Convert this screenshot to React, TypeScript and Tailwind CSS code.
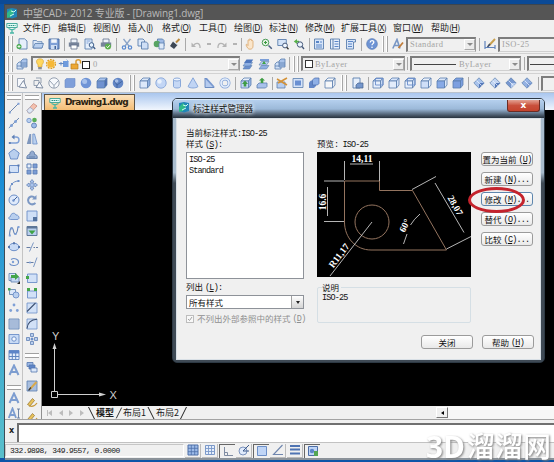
import React from 'react';

const B = '#5b7fae';
const L = '#b9cfee';
const M = '#7fa0d6';

const cube = (front: string, top = '#dbe7f8', side = '#8fafdf') => (
  <>
    <path d="M1 4 4 1h7L8.500 4z" fill={top} stroke={B} strokeWidth=".8" />
    <path d="M8.500 4 11 1v7l-2.500 3z" fill={side} stroke={B} strokeWidth=".8" />
    <path d="M1 4h7.500v7H1z" fill={front} stroke={B} strokeWidth=".8" />
  </>
);

const diamond = (a: string, b: string) => (
  <>
    <path d="M6 .8 11.200 6 6 11.200.8 6z" fill={a} stroke={B} strokeWidth=".7" />
    <path d="M6 6 11.200 6 6 11.200z" fill={b} />
    <path d="M3.500 3.500 8.500 8.500" stroke="#e9f1fc" strokeWidth=".8" />
  </>
);

const page = <path d="M3 .8h5.500L11 3v8H3z" fill="#e6effb" stroke={B} strokeWidth=".9" />;

const glyphs: Record<string, React.ReactNode> = {
  logo: (
    <>
      <path d="M1 2l5-1 5 1v8l-5 1.500L1 10z" fill="#2186b8" />
      <path d="M1 6l4-4 3 3-3 5-4 1z" fill="#2fb98a" />
      <path d="M5 4l3 1 2-2M4 9l4-2" stroke="#c9fff2" fill="none" />
    </>
  ),
  doc: (
    <>
      <path d="M.8 1.500h10.400v4H.8z" fill="#e4fbf6" stroke="#39a394" strokeWidth=".9" />
      <path d="M2.500 3.500h7" stroke="#2b9384" strokeWidth="1.200" strokeDasharray="1.500 .6" />
      <path d="M2.500 6.500 6 8l3.500-1.500M6 7v4M4 11h4" stroke="#48b5a5" fill="none" strokeWidth="1.300" />
    </>
  ),
  new: (
    <>
      {page}
      <circle cx="3" cy="8.500" r="2.500" fill="#46a84c" />
      <path d="M3 7v3M1.500 8.500h3" stroke="#fff" strokeWidth=".8" />
    </>
  ),
  open: (
    <>
      <path d="M1 10V2.500h3.500l1 1.200H10V10z" fill="#dbe7f8" stroke={B} strokeWidth=".8" />
      <path d="M1 10l2-4.500h8.500L10 10z" fill={L} stroke={B} strokeWidth=".8" />
    </>
  ),
  save: (
    <>
      <path d="M1 1h10v10H1z" fill={M} stroke="#41649b" strokeWidth=".9" />
      <path d="M3.200 1.300h5.600v3.500H3.200z" fill="#f2f6fc" />
      <path d="M3 7h6v4H3z" fill="#cfdef3" />
      <path d="M6.500 8h1.500v3H6.500z" fill="#41649b" />
    </>
  ),
  print: (
    <>
      <path d="M3 1h6v4H3z" fill="#eef3fa" stroke="#60708a" strokeWidth=".8" />
      <path d="M.8 4.500h10.400v4.200H.8z" fill="#77849a" />
      <path d="M3 7h6v4H3z" fill="#fff" stroke="#60708a" strokeWidth=".8" />
    </>
  ),
  printok: (
    <>
      <path d="M3 1h6v4H3z" fill="#eef3fa" stroke="#60708a" strokeWidth=".8" />
      <path d="M.8 4.500h10.400v4.200H.8z" fill="#77849a" />
      <circle cx="8" cy="8.500" r="3" fill="#5cae4d" />
      <path d="M6.500 8.500 7.700 9.700 9.700 7.300" stroke="#fff" fill="none" />
    </>
  ),
  preview: (
    <>
      <path d="M1 1h7v10H1z" fill="#e6effb" stroke={B} strokeWidth=".9" />
      <path d="M2.500 3h4M2.500 5h2" stroke={M} />
      <circle cx="7.500" cy="7" r="2.300" fill="#e8f4ff" stroke="#3f5f8c" />
      <path d="M9.200 8.800 11.200 11" stroke="#3f5f8c" strokeWidth="1.400" />
    </>
  ),
  cut: (
    <>
      <path d="M2.500 1 8 8M9.500 1 4 8" stroke="#8aa4c8" strokeWidth="1.300" />
      <circle cx="3" cy="9.500" r="1.700" fill="none" stroke="#5b8bd0" strokeWidth="1.200" />
      <circle cx="9" cy="9.500" r="1.700" fill="none" stroke="#5b8bd0" strokeWidth="1.200" />
    </>
  ),
  copy: (
    <>
      <path d="M1 1h5l1.500 1.500V8H1z" fill="#dde9f9" stroke={B} strokeWidth=".9" />
      <path d="M4.500 4h4.700L11 5.500V11H4.500z" fill="#cfdff6" stroke={B} strokeWidth=".9" />
    </>
  ),
  paste: (
    <>
      <path d="M4.500 1h5l1.500 1.500V8H4.500z" fill="#9fbbe6" stroke={B} strokeWidth=".9" />
      <circle cx="4" cy="6" r="3.300" fill="#58a463" />
      <path d="M6 5h5v6H6z" fill="#dde9f9" stroke={B} strokeWidth=".8" />
    </>
  ),
  brush: (
    <>
      <path d="M10.500 1 7 4.500" stroke="#b9893e" strokeWidth="2" />
      <path d="M4 3.500 8.500 7 5 11 1 8z" fill="#3d4754" />
      <path d="M4.500 3.800 8.200 6.600" stroke="#cdd5df" />
    </>
  ),
  undo: (
    <>
      <path d="M3.500 7.500c2-3 6-3 6.500 1V10" fill="none" stroke="#b4b4b4" strokeWidth="1.300" />
      <path d="M1.500 4.500v4.500H6z" fill="#b4b4b4" />
    </>
  ),
  redo: (
    <>
      <path d="M8.500 7.500c-2-3-6-3-6.500 1V10" fill="none" stroke="#b4b4b4" strokeWidth="1.300" />
      <path d="M10.500 4.500v4.500H6z" fill="#b4b4b4" />
    </>
  ),
  pan: (
    <path
      d="M3 6V2.500c0-.8 1-.8 1.200 0V1.500c0-.8 1.200-.8 1.200 0v.3c0-.8 1.300-.8 1.300.2v1c0-.7 1.300-.7 1.300.2V8c0 2-1 3.200-3 3.200S2.500 10 1 7c0-1 1-1 2 .5z"
      fill="#fbe6cb"
      stroke="#d9a66b"
      strokeWidth=".8"
    />
  ),
  zoom: (
    <>
      <circle cx="4.500" cy="4.500" r="3.300" fill="#e5f3e5" stroke="#4f9d5a" />
      <path d="M3 4.500h3M4.500 3v3" stroke="#3a9a3f" />
      <path d="M7.500 7.500 10.800 10.800" stroke="#4a5f80" strokeWidth="1.500" />
    </>
  ),
  zoomwin: (
    <>
      <path d="M.8 1.500h8.500v6H.8z" fill="#d5e4f8" stroke={B} strokeWidth=".9" />
      <circle cx="8" cy="7.500" r="2.400" fill="#eef6ff" stroke="#46597a" />
      <path d="M9.700 9.300 11.500 11.200" stroke="#333" strokeWidth="1.300" />
    </>
  ),
  zoomprev: (
    <>
      <path d="M.8 3.500 4 1v1.700h2v1.700H4V6z" fill="#56b04a" />
      <circle cx="7" cy="6.500" r="2.700" fill="#eef6ff" stroke="#46597a" />
      <path d="M9 8.500 11 11" stroke="#46597a" strokeWidth="1.300" />
    </>
  ),
  props: (
    <>
      <path d="M1.500 1h9v10h-9z" fill="#d7e5f8" stroke={B} strokeWidth=".9" />
      <path d="M3 3h3v2H3z" fill="#5a86c8" />
      <path d="M3 7h6M3 9h6M7 4h2" stroke="#5a86c8" />
    </>
  ),
  center: (
    <>
      <path d="M1.500 1h9v10h-9z" fill="#e6effb" stroke={B} strokeWidth=".9" />
      <path d="M4 1v10" stroke={B} />
      <path d="M5.500 3.500h4M5.500 6h4M5.500 8.500h4" stroke="#5a86c8" strokeWidth="1.200" />
    </>
  ),
  palette: (
    <>
      <path d="M1.500 1.500h9V4H8.500v7h-7z" fill="#d7e5f8" stroke={B} strokeWidth=".9" />
      <path d="M3 3.500h5M3 6h4M3 8.500h4" stroke="#5a86c8" strokeWidth="1.200" />
    </>
  ),
  help: (
    <>
      <circle cx="6" cy="6" r="5.400" fill="#6d93d4" stroke="#5777ae" strokeWidth=".6" />
      <path d="M4.200 4.500c0-2.500 3.700-2.400 3.600-.2C7.800 5.600 6 5.700 6 7.300" stroke="#fff" strokeWidth="1.300" fill="none" />
      <circle cx="6" cy="9.200" r=".8" fill="#fff" />
    </>
  ),
  textstyle: (
    <>
      <path d="M.8 10.500 5 1.500l3 9M2.500 7.500H7" stroke="#7896c4" strokeWidth="1.600" fill="none" />
      <path d="M11 4.500 6.500 10" stroke="#c07d3b" strokeWidth="1.800" />
    </>
  ),
  dimstyle: (
    <>
      <path d="M1 3v8M1 9.500h10M11 7v4" stroke="#6184bd" strokeWidth="1.200" />
      <path d="M11 1 5 7.500" stroke="#c9a04e" strokeWidth="1.900" />
      <path d="M6 6 3.500 9" stroke="#3d4f70" strokeWidth="1.600" />
    </>
  ),
  layers: (
    <>
      <path d="M1 6l2-2h4v7H1z" fill="#cfdff6" stroke={B} strokeWidth=".8" />
      <path d="M5 3l2-2h4v8H5z" fill="#a9c3ea" stroke={B} strokeWidth=".8" />
      <path d="M5 5h6M5 7h6M1 8h4" stroke={B} strokeWidth=".8" />
    </>
  ),
  stack: (
    <>
      <path d="M1 11 3.500 7.500H10L7.500 11z" fill="#6a8fcf" stroke={B} strokeWidth=".6" />
      <path d="M1 8 3.500 4.500H10.500L8 8z" fill="#8fb0e4" stroke={B} strokeWidth=".6" />
      <path d="M2 5 4.500 1.500H11.200L9 5z" fill="#4f77bd" />
    </>
  ),
  stackgreen: (
    <>
      <path d="M1 11 3.500 7.500H11L8.500 11z" fill="#8fb0e4" stroke={B} strokeWidth=".6" />
      <path d="M1 7 3.500 3.500H11L8.500 7z" fill="#b8ceef" stroke={B} strokeWidth=".6" />
      <path d="M2 1h9v2H2z" fill="#7b9ed8" />
      <path d="M4 6 6 3l2 3z" fill="#3da343" />
    </>
  ),
  bulb: (
    <>
      <path d="M6 .8c-4.500 0-4 4-2 6V9h4V6.800c2-2 2.500-6-2-6z" fill="#ffd75e" stroke="#d3a02b" strokeWidth=".6" />
      <path d="M4.200 9h3.600v2.300H4.200z" fill="#8d8d8d" />
    </>
  ),
  sun: (
    <>
      <circle cx="6" cy="6" r="4.500" fill="none" stroke="#dd9c20" strokeWidth="1.200" strokeDasharray="1.800 1" />
      <circle cx="6" cy="6" r="3.700" fill="#f6b836" />
    </>
  ),
  freeze: (
    <>
      <path d="M5 3h5.500v6H5z" fill="#6f9bdd" />
      <path d="M.8 5.500h5M3 4v3.500" stroke="#6388c2" />
      <path d="M8.500 1.500 11 4" stroke="#9ab7e2" />
    </>
  ),
  lock: (
    <>
      <path d="M1 6h7v5H1z" fill="#eda834" stroke="#b97e1f" strokeWidth=".7" />
      <path d="M6 6V3.500C6 1 10.800 1 10.500 4v1.500" fill="none" stroke="#d99a31" strokeWidth="1.500" />
    </>
  ),
  tri: (
    <>
      <path d="M1.500 1.500h7v8h-7z" fill="#f7f9fc" stroke="#8b97a9" strokeWidth=".8" />
      <path d="M3 10 7.500 3.500 10.500 11z" fill="#f7f9fc" stroke="#7f8da3" />
    </>
  ),
  tri3: (
    <>
      <path d="M2 3.500h5v5H2zM4 1h5v5" fill="none" stroke="#8b97a9" strokeWidth=".9" />
      <path d="M4 10.500 7.500 5 11 11z" fill="#f7f9fc" stroke="#7f8da3" />
    </>
  ),
  wiresphere: (
    <>
      <circle cx="6" cy="6" r="5.200" fill="#f7f9fc" stroke="#8b97a9" strokeWidth=".9" />
      <path d="M1.500 3.500 6 8.500 10.500 3.500M6 8.500v2.500" stroke="#8b97a9" fill="none" strokeWidth=".9" />
    </>
  ),
  box1: <path d="M2.500 1.500H11V9L9.500 10.500H1V3z" fill="#7f9fda" stroke="#6c8ac2" strokeWidth=".6" />,
  sphere1: (
    <>
      <circle cx="6" cy="6" r="5.300" fill="#6f94d6" />
      <circle cx="4.600" cy="4.400" r="2.500" fill="#b7cdf1" opacity=".8" />
    </>
  ),
  box2: cube('#7092d0', '#a9c3ee', '#4c6db0'),
  sphere2: (
    <>
      <circle cx="6" cy="6" r="5.300" fill="#6387c6" />
      <path d="M2 3.500 5 8 10.500 4M5 8v3" stroke="#3f5f99" fill="none" strokeWidth=".8" />
      <circle cx="4.600" cy="4" r="1.800" fill="#c3d6f4" opacity=".7" />
    </>
  ),
  cube: cube('#dce8fa'),
  cubea: (
    <>
      {cube('#e6effc', '#dbe7f8', '#c8d9f4')}
      <path d="M3.500 1.500H11V8H3.500z" fill="none" stroke="#6c8fcc" strokeWidth=".9" />
    </>
  ),
  cubeb: cube('#e2ecfb', '#d8e5fa', '#d8e5fa'),
  cubec: cube('#cfdff8', '#eaf1fb', '#eaf1fb'),
  cubed: cube('#86a9e6', '#dbe7f8', '#dbe7f8'),
  cubee: cube('#7c9fe0', '#7c9fe0', '#7c9fe0'),
  cubew: cube('#f6f7f9', '#f6f7f9', '#e9edf3'),
  ball: (
    <>
      <circle cx="6" cy="6" r="5.200" fill="#c3d6f5" stroke={M} strokeWidth=".8" />
      <circle cx="4.500" cy="4.500" r="2.200" fill="#eaf2fd" />
    </>
  ),
  cyl: (
    <>
      <path d="M2.500 2.500v7c0 2 7 2 7 0v-7" fill="#c6d8f5" stroke={M} strokeWidth=".9" />
      <ellipse cx="6" cy="2.500" rx="3.500" ry="1.500" fill="#eef4fd" stroke={M} strokeWidth=".9" />
    </>
  ),
  cone: <path d="M6 .8 11 9.500c-2 2-8 2-10 0z" fill="#c0d4f4" stroke={M} strokeWidth=".9" />,
  wedge: (
    <>
      <path d="M2 1v9.500h9z" fill="#b5cbef" stroke="#5f82bb" strokeWidth=".9" />
      <path d="M2 1h2l7.500 8.500-.5 1z" fill="#7496d0" />
    </>
  ),
  torus: (
    <>
      <circle cx="6" cy="6" r="4" fill="none" stroke={M} strokeWidth="3" />
      <circle cx="6" cy="6" r="4" fill="none" stroke="#e3edfb" strokeWidth="1.700" />
    </>
  ),
  extrude: (
    <>
      {cube('#c3d6f5', '#e7effb', '#9cb8e5')}
      <path d="M5 3.500 8 7H6.300v2.500H3.700V7H2z" fill="#3f9c45" />
    </>
  ),
  revolve: (
    <>
      <path d="M1 8 3 6h8v3.500L9.500 11H1z" fill="#a8c1ea" stroke={B} strokeWidth=".8" />
      <path d="M6 .8 9 3.500H7.300V6H4.700V3.500H3z" fill="#3f9c45" />
    </>
  ),
  slice: (
    <>
      <path d="M1 5h8v6H1z" fill="#b8ceef" stroke={B} strokeWidth=".8" />
      <path d="M1 2 11 8M11 1 2 6" stroke="#d49237" strokeWidth="1.500" />
    </>
  ),
  section: (
    <>
      <path d="M1 1.500h10v9H1z" fill="#d5e3f8" stroke={B} strokeWidth=".8" />
      <path d="M3 3.500h6v5H3z" fill="#6a90d2" />
    </>
  ),
  interfere: (
    <>
      <path d="M1 5.500 3 3.500h5v5.500L6 11H1z" fill="#6488c9" />
      <path d="M4.500 3 6.500 1H11v5.500L9.500 8h-5z" fill="#8fb0e6" stroke="#4a6dac" strokeWidth=".7" />
    </>
  ),
  view: (
    <>
      <path d="M1 1h7v10H1z" fill="#e6effb" stroke={B} strokeWidth=".9" />
      <path d="M4 11V8l2-2h5v5z" fill="#7597cc" stroke="#46618e" strokeWidth=".7" />
    </>
  ),
  dia1: diamond('#a9c3ec', '#5679ba'),
  dia2: diamond('#c3d5f2', '#5679ba'),
  dia3: diamond('#7898d0', '#b4caee'),
  dia4: diamond('#94b1e2', '#7898d0'),
  line: (
    <>
      <path d="M1.500 10.500 10.500 1.500" stroke="#6d87b0" />
      <path d="M.8 9.500h2v2h-2zM9.500.8h2v2h-2z" fill={M} />
    </>
  ),
  xline: (
    <>
      <path d="M.8 11 11 1" stroke="#6d87b0" />
      <circle cx="3.500" cy="8.500" r="1.500" fill={M} />
      <circle cx="7.500" cy="4.500" r="1.500" fill={M} />
    </>
  ),
  pline: (
    <>
      <path d="M1.500 10H8c4 0 4-6 0-6H5.500" fill="none" stroke={M} strokeWidth="1.400" />
      <path d="M6.500 1.500 3.500 4l3 2.500zM.8 9h2v2h-2z" fill="#5f80b5" />
    </>
  ),
  polygon: <path d="M6 1 11.200 5 9.300 11H2.700L.8 5z" fill={L} stroke="#6c8fc8" />,
  rect: (
    <>
      <path d="M1.500 2.500h9v7h-9z" fill="#d2e1f7" stroke="#6c8fc8" />
      <path d="M.5 8.500h2v2h-2zM9.500 1.500h2v2h-2z" fill="#5476ad" />
    </>
  ),
  arc: (
    <>
      <path d="M1.800 10.500C2 6 5 2.500 10 2" fill="none" stroke="#6c8fc8" />
      <path d="M.8 9.500h2v2h-2zM9.500 1h2v2h-2zM3 4h2v2H3z" fill="#6c8fc8" />
    </>
  ),
  circle: (
    <>
      <circle cx="6" cy="6" r="5" fill="#dfeafb" stroke="#6c8fc8" />
      <path d="M5.500 6.500 9 3" stroke="#41629a" />
      <circle cx="5.500" cy="6.500" r="1.200" fill="#6c8fc8" />
    </>
  ),
  cloud: (
    <path d="M2.500 9.500c-2.500 0-2-3 0-3C2.500 3 7 2 8 5c3-.5 4.500 4.500 1 4.500z" fill={L} stroke="#6c8fc8" strokeWidth=".9" />
  ),
  spline: (
    <>
      <path d="M1.500 10.500C2 1 4.500 1 5.500 6s3.500 4 4.500-4" fill="none" stroke="#5f80b5" strokeWidth="1.100" />
      <path d="M.8 9.500h2v2h-2zM2.500 2.500h2v2h-2zM9.500 1h2v2h-2zM6.500 8h2v2h-2z" fill={M} />
    </>
  ),
  ellipse: (
    <>
      <ellipse cx="6" cy="6" rx="5" ry="3.700" fill="#c9dbf5" stroke="#6c8fc8" />
      <path d="M0 5h2v2H0zM10 5h2v2h-2zM5 1.300h2v2H5z" fill="#5476ad" />
    </>
  ),
  earc: (
    <>
      <path d="M3 3.500C6 1.500 11 3 10.500 6.500 10 10 3 10.500 1.500 7.500" fill="none" stroke="#6c8fc8" strokeWidth="1.100" />
      <circle cx="5" cy="6" r="1.200" fill={M} />
    </>
  ),
  insert: (
    <>
      <path d="M1 1.500h7v7H1z" fill="#dce8fa" stroke={B} strokeWidth=".8" />
      <path d="M3 5h8v5H3z" fill="#c5d8f3" stroke={B} strokeWidth=".8" />
      <path d="M3 3h4V1l4 3.500L7 8V6H3z" fill="#43a648" />
      <path d="M9 12h3V9z" fill="#222" />
    </>
  ),
  block: (
    <>
      <path d="M1.500 2.500h6v5h-6z" fill="#dce8fa" stroke={B} strokeWidth=".8" />
      <circle cx="8" cy="8" r="3" fill={L} stroke="#6c8fc8" strokeWidth=".9" />
      <path d="M0 1h2.500v2.500H0z" fill="#4ba751" />
    </>
  ),
  point: (
    <>
      <circle cx="6" cy="3" r="1.400" fill={M} />
      <circle cx="2.700" cy="8.500" r="1.400" fill={M} />
      <circle cx="9.300" cy="8.500" r="1.400" fill={M} />
    </>
  ),
  hatch: (
    <>
      <path d="M1 1h10v10H1z" fill="#c6d6ee" stroke={B} strokeWidth=".8" />
      <path d="M1 3h10M1 5h10M1 7h10M1 9h10M3 1v10M5 1v10M7 1v10M9 1v10" stroke="#8ba3c8" strokeWidth=".6" />
    </>
  ),
  region: (
    <>
      <path d="M1 1.500h10v9H1z" fill="#c9dbf5" stroke="#6c8fc8" strokeWidth=".9" />
      <circle cx="6" cy="6" r="2.200" fill="#f4f8fe" stroke="#6c8fc8" />
    </>
  ),
  table: (
    <>
      <path d="M1 1.500h10v9H1z" fill="#e3edfb" stroke="#6085c0" strokeWidth=".9" />
      <path d="M1 1.500h10v3H1z" fill="#5c84c8" />
      <path d="M1 7.500h10M4.300 4v6.500M7.700 4v6.500" stroke="#6085c0" />
    </>
  ),
  text: <path d="M1.500 11 6 1.500 10.500 11M3 8h6" fill="none" stroke="#7d9dd0" strokeWidth="2" />,
  texti: (
    <>
      <path d="M.8 11 4.500 1.500 8 11M2 8h5" fill="none" stroke="#7d9dd0" strokeWidth="1.800" />
      <path d="M10.500 2v9M9 2h3M9 11h3" stroke="#62799d" strokeWidth=".9" />
    </>
  ),
  erase: (
    <>
      <path d="M1 8.500 7.500 1.500 11 4 4.500 11H2.500z" fill="#f3c0ae" stroke="#c98c7b" strokeWidth=".8" />
      <path d="M4 5.300 7.500 8 4.500 11H2.500L1 8.500z" fill="#dfe8f5" stroke="#8fa3c2" strokeWidth=".7" />
    </>
  ),
  copyobj: (
    <>
      <circle cx="3" cy="3.500" r="2.200" fill={L} stroke="#6c8fc8" strokeWidth=".8" />
      <circle cx="8.500" cy="3" r="2.300" fill="#59ae57" />
      <circle cx="8" cy="8.500" r="2.500" fill="#9dbbe9" stroke="#5476ad" strokeWidth=".8" />
    </>
  ),
  mirror: (
    <>
      <path d="M5.200 1v10H.8L3.500 1z" fill="#7f97bd" />
      <path d="M6.800 1v10h4.400L8.500 1z" fill={L} stroke="#6c8fc8" strokeWidth=".8" />
    </>
  ),
  offset: (
    <path d="M.8 10.500c0-3 1-4 3-4C3.500 2 9 2 8.500 6.500c2 0 3 1 2.700 4zM3 9h6" fill="#93abd0" stroke="#5d7aa6" strokeWidth=".9" />
  ),
  array: (
    <>
      <path d="M1 1h4v4H1z" fill="#e6effb" stroke="#5f80b5" />
      <path d="M7 1h4v4H7zM1 7h4v4H1zM7 7h4v4H7z" fill="#7b9cd4" stroke="#5f80b5" strokeWidth=".9" />
    </>
  ),
  move: (
    <path d="M6 .5 8 3H7v2h2V4l2.500 2L9 8V7H7v2h1l-2 2.500L4 9h1V7H3v1L.5 6 3 4v1h2V3H4z" fill="#abc3ea" stroke="#5f80b5" strokeWidth=".7" />
  ),
  rotate: (
    <>
      <path d="M9.500 9C6 12 1.500 9.500 2.200 5.500 3 2 7 1.500 9 4" fill="none" stroke="#7c98c4" strokeWidth="2" />
      <path d="M10.500 1v4.500H6z" fill="#7c98c4" />
    </>
  ),
  scale: (
    <>
      <path d="M1 1h10v10H1z" fill="#cfdff6" stroke="#6c8fc8" strokeWidth=".9" />
      <path d="M7 7h4v4H7z" fill="#54739f" />
    </>
  ),
  stretch: (
    <>
      <path d="M1 1.500h10v9H1z" fill="#b9cfee" stroke="#5d7697" />
      <path d="M1 1.500h10v2H1z" fill="#5d7697" />
      <path d="M6 9.500 2.500 5.500h7z" fill="#3ea345" />
    </>
  ),
  trim: (
    <>
      <path d="M.5 6.500h4M7.500 6.500h1.500M10 6.500h2" stroke="#667da3" />
      <path d="M3.500 10.500 7.500 1.500" stroke="#7c98c4" />
    </>
  ),
  extend: (
    <>
      <path d="M.5 6.500h7" stroke="#667da3" />
      <circle cx="4" cy="6.500" r="1.100" fill={M} />
      <path d="M7.500 11 11 1.500" stroke="#7c98c4" />
    </>
  ),
  breakpt: (
    <>
      <path d="M1.500 2h9.500v8.500H1.500z" fill="#d2e1f7" stroke="#6c8fc8" strokeWidth=".9" />
      <path d="M0 4h3v3H0z" fill="#43a648" />
    </>
  ),
  brk: (
    <>
      <path d="M1.500 4h9v7h-9z" fill="#d2e1f7" stroke="#6c8fc8" strokeWidth=".9" />
      <path d="M1 1h3v3H1zM8 1h3v3H8z" fill="#43a648" />
    </>
  ),
  chamfer: (
    <>
      <path d="M1 1h10v10H1z" fill="#d2e1f7" stroke="#6c8fc8" strokeWidth=".8" />
      <path d="M1 9.500 9.500 1" stroke="#3c4f70" strokeWidth="1.100" />
    </>
  ),
  fillet: (
    <>
      <path d="M1 1h10v10H1z" fill="#d2e1f7" stroke="#6c8fc8" strokeWidth=".8" />
      <path d="M1 10.500C1.500 5 5 1.500 11 1.200" stroke="#3c4f70" fill="none" strokeWidth="1.100" />
    </>
  ),
  explode: (
    <>
      <path d="M4.500 0.500h3v3h-3zM4.500 8.500h3v3h-3zM.5 4.500h3v3h-3zM8.500 4.500h3v3h-3z" fill={L} stroke="#5f80b5" strokeWidth=".8" />
      <circle cx="6" cy="6" r="1.500" fill="#6c8fc8" />
    </>
  ),
  order: (
    <>
      <path d="M1 1.500h6v4H1z" fill="#9db9e6" stroke="#5476ad" strokeWidth=".8" />
      <path d="M3 4h6v4H3z" fill="#5c84c8" stroke="#5476ad" strokeWidth=".8" />
      <path d="M5 7h6v4H5z" fill="#dce8fa" stroke="#5476ad" strokeWidth=".8" />
    </>
  ),
  edithatch: (
    <>
      <path d="M1 1h10v10H1z" fill="#a9bfdf" stroke={B} strokeWidth=".8" />
      <path d="M10.500 2 4 9" stroke="#d8a94c" strokeWidth="2" />
      <path d="M5 7.500 2.500 10.500" stroke="#3a3a3a" strokeWidth="1.200" />
    </>
  ),
  pencil: (
    <>
      <path d="M1.500 8.500 6.500 2.500 8.500 4.500 4 10z" fill="#e9c35b" stroke="#8f6f2b" strokeWidth=".7" />
      <path d="M3 10c3 1 6 0 8-3" fill="none" stroke="#c79a3c" strokeWidth="1.200" />
    </>
  ),
  snap: (
    <>
      <path d="M1 1h10v10H1z" fill="#9dbbe8" stroke="#4c6ea8" />
      <path d="M4.300 1v10M7.700 1v10M1 4.300h10M1 7.700h10" stroke="#4c6ea8" strokeWidth=".8" />
    </>
  ),
  grid: (
    <>
      <path d="M1.500 1.500h9v9h-9z" fill="#e5eefb" stroke="#7b99c9" />
      <path d="M4.500 1v10M7.500 1v10M1 4.500h10M1 7.500h10" stroke="#7b99c9" strokeWidth=".9" />
    </>
  ),
  ortho: <path d="M2.500 2v8.500H11M2.500 7.500h3v3" fill="none" stroke="#7f8ca3" />,
  polar: (
    <>
      <circle cx="5" cy="7" r="4" fill="#dfeafb" stroke="#7b93bd" />
      <path d="M5 7 11 1M5 7h6" stroke="#3e5a8a" />
    </>
  ),
  osnap: <path d="M1.500 1.500h9v9h-9z" fill="#c0d5f6" stroke="#6c8fc8" />,
  otrack: <path d="M10.500 1 1.500 10.500H11" fill="none" stroke="#6f86ae" strokeWidth="1.100" />,
  lwt: <path d="M1 2h10M1 5.500h10M1 9.500h10" stroke="#4f74b3" strokeWidth="2" />,
  model: (
    <>
      <path d="M1.500 1.500h9v9h-9z" fill="#c0d5f6" stroke="#4c6ea8" />
      <circle cx="5" cy="6" r="2.200" fill="#5b86c9" />
      <path d="M7 6h4v5H7z" fill="#53a654" />
    </>
  ),
};

const Icon = ({ name }: { name: string }) => (
  <svg viewBox="0 0 12 12" className="block w-3 h-3 shrink-0">
    {glyphs[name]}
  </svg>
);

const Sep = () => <div className="w-px h-[13px] bg-[#a9a9a9] shrink-0" />;

const Grip = () => (
  <div className="flex gap-[2px] shrink-0">
    <div className="w-[2px] h-[16px] bg-white border-r border-[#a6a6a6]" />
    <div className="w-[2px] h-[16px] bg-white border-r border-[#a6a6a6]" />
  </div>
);

// "|" draws a separator, "grip" a drag handle, anything else is an icon
const Tools = ({ items }: { items: (string | [string, number])[] }) => (
  <>
    {items.map((item, i) => {
      const [name, width] = Array.isArray(item) ? item : [item, 16];
      return (
        <div key={i} className="flex items-center justify-center shrink-0" style={{ width }}>
          {name === '|' ? (
            <Sep />
          ) : name === 'grip' ? (
            <Grip />
          ) : name === 'down' ? (
            <div className="w-1 h-[2px] bg-[#b4b4b4]" />
          ) : (
            name && <Icon name={name} />
          )}
        </div>
      );
    })}
  </>
);

const Combo = ({ className, children, arrow = true }: { className: string; children?: React.ReactNode; arrow?: boolean }) => (
  <div
    className={`flex items-center shrink-0 h-[15px] border-t-2 border-l-2 border-[#7d7d7d] border-b border-b-[#d0d0d0] border-r border-r-[#9a9a9a] text-[8.5px] text-[#a3a3a3] font-['Liberation_Serif',serif] tracking-[0.4px] ${className}`}
  >
    {children}
    {arrow && (
      <div className="ml-auto w-[11px] h-[11px] bg-[#ececec] border border-[#a9a9a9] border-t-white border-l-white flex items-center justify-center">
        <div className="border-x-[3px] border-x-transparent border-t-[3px] border-t-[#8b8b8b]" />
      </div>
    )}
  </div>
);

const menus = [
  { label: '文件', key: 'F', width: 35 },
  { label: '编辑', key: 'E', width: 35 },
  { label: '视图', key: 'V', width: 35 },
  { label: '插入', key: 'I', width: 34 },
  { label: '格式', key: 'O', width: 37 },
  { label: '工具', key: 'T', width: 35 },
  { label: '绘图', key: 'D', width: 35 },
  { label: '标注', key: 'N', width: 36 },
  { label: '修改', key: 'M', width: 36 },
  { label: '扩展工具', key: 'X', width: 52 },
  { label: '窗口', key: 'W', width: 38 },
  { label: '帮助', key: 'H', width: 36 },
];

const drawTools = [
  'line', 'xline', 'pline', 'polygon', 'rect', 'arc', 'circle', 'cloud', 'spline',
  'ellipse', 'earc', 'insert', 'block', 'point', 'hatch', 'region', 'table', 'text',
];

const modifyTools = [
  'erase', 'copyobj', 'mirror', 'offset', 'array', 'move', 'rotate', 'scale',
  'stretch', 'trim', 'extend', 'breakpt', 'brk', 'chamfer', 'fillet', 'explode',
];

const VGrip = () => (
  <div className="w-[14px] h-[5px] border-y border-[#a0a0a0] shrink-0 bg-white" />
);

const VTools = ({ items }: { items: string[] }) => (
  <>
    {items.map((name, i) => (
      <div key={i} className="h-[15.45px] flex items-center justify-center shrink-0">
        <Icon name={name} />
      </div>
    ))}
  </>
);

const Key = ({ k, tail = '' }: { k: string; tail?: string }) => (
  <span className="font-['Liberation_Mono',monospace] tracking-[-0.8px]">
    (<u>{k}</u>){tail}
  </span>
);

const Mono = ({ children }: { children: React.ReactNode }) => (
  <span className="font-['Liberation_Mono',monospace] tracking-[-0.85px]">{children}</span>
);

const DialogButton = ({ label, k, tail, active }: { label: string; k?: string; tail?: string; active?: boolean }) => (
  <button
    className={`h-[14px] w-[52px] rounded-[3px] border bg-gradient-to-b from-white to-[#e9e9e9] flex items-center justify-center whitespace-nowrap ${
      active ? 'border-[#5e86ad]' : 'border-[#9b9b9b]'
    }`}
  >
    {label}
    {k && <span className="ml-[2px]"><Key k={k} tail={tail} /></span>}
  </button>
);

const Preview = () => (
  <svg viewBox="317 152 154 125" className="block w-[154px] h-[125px] bg-black" fill="none">
    <g stroke="#94745f" strokeWidth="1">
      <path d="M344.500 181H379.500V190.500H412.500L446.500 250H371C356 250 344.500 238 344.500 222Z" />
      <circle cx="372" cy="222" r="17" />
    </g>
    <g stroke="#c9c9c9" strokeWidth=".9">
      <path d="M344.500 161V180M379.500 161V181M350 164H373" />
      <path d="M324 181H344M324 221.500H344M327.500 187V216" />
      <path d="M412 189.500 436 176.500M435 183 464 232.500M446.500 249 471 236.500" />
      <path d="M372 222 330 276" />
      <path d="M420 214Q414 219 410.500 225M407 234 403.500 244" />
    </g>
    <g fill="#fff" fontFamily="Liberation Serif, serif" fontSize="9.500" fontWeight="bold" textAnchor="middle">
      <text x="362" y="162">14,11</text>
      <text transform="translate(325.500 202) rotate(-90)">16.6</text>
      <text transform="translate(452.500 207) rotate(60)">28,07</text>
      <text transform="translate(407.500 227) rotate(-62)">60°</text>
      <text transform="translate(341.500 257.500) rotate(-53)">R11,17</text>
    </g>
  </svg>
);

const StyleDialog = () => (
  <div className="absolute left-[172px] top-[98px] w-[373px] h-[265px] rounded-[5px] border border-[#2d3944] bg-gradient-to-b from-[#a9bccd] from-28% to-[#3f4a55] to-32% px-[3px] pb-[2px] flex flex-col overflow-hidden text-[8.5px] leading-[11px] text-[#111]">
    <div className="-mx-[3px] h-[19px] pl-[5px] pr-[4px] flex items-start shrink-0 bg-gradient-to-b from-[#b5d0ee] via-[#9cb9d9] via-50% to-[#27323d] border-t border-[#dcebf9]">
      <div className="pt-[1px]"><Icon name="logo" /></div>
      <span className="ml-[3px] mt-[2px] text-[8.6px] leading-[12px] [text-shadow:0_0_4px_#fff,0_0_4px_#fff]">标注样式管理器</span>
      <div className="ml-auto w-[33px] h-[12px] rounded-b-[3px] border border-t-0 border-[#6b2c25] bg-gradient-to-b from-[#e2a193] via-[#c9503c] via-50% to-[#c4432d] text-white font-bold text-[9px] leading-[10px] text-center font-['DejaVu_Sans',sans-serif]">
        x
      </div>
    </div>
    <div className="flex-1 bg-[#f0f0f0] border border-[#d9e0e6] pl-[9px] pr-[6px] pt-[8px]">
      <div className="h-[11px]">当前标注样式<Mono>:ISO-25</Mono></div>
      <div className="flex h-[11px]">
        <div className="w-[131px]">样式<span className="ml-[2px]"><Key k="S" tail=":" /></span></div>
        <div>预览<Mono>: ISO-25</Mono></div>
      </div>
      <div className="flex mt-[3px] h-[127px]">
        <div className="w-[118px] h-[127px] mr-[13px] bg-white border border-[#8e9299] pl-[2px]">
          <div className="h-[10.5px]"><Mono>ISO-25</Mono></div>
          <div className="h-[10.5px]"><Mono>Standard</Mono></div>
        </div>
        <Preview />
        <div className="ml-[10px] flex flex-col gap-[6px]">
          <DialogButton label="置为当前" k="U" />
          <DialogButton label="新建" k="N" tail="..." />
          <DialogButton label="修改" k="M" tail="..." active />
          <DialogButton label="替代" k="O" tail="..." />
          <DialogButton label="比较" k="C" tail="..." />
        </div>
      </div>
      <div className="flex mt-[2px] h-[42px]">
        <div className="w-[118px] mr-[13px]">
          <div className="h-[11px]">列出<span className="ml-[2px]"><Key k="L" tail=":" /></span></div>
          <div className="mt-[3px] h-[14px] bg-white border border-[#8e9299] pl-[2px] flex items-center">
            所有样式
            <div className="ml-auto w-[12px] h-[12px] border-l border-[#a0a0a0] bg-gradient-to-b from-white to-[#d4d4d4] flex items-center justify-center">
              <div className="border-x-[2.5px] border-x-transparent border-t-[3px] border-t-[#222]" />
            </div>
          </div>
          <div className="mt-[4px] h-[11px] flex items-center text-[#8f8f8f] whitespace-nowrap">
            <div className="w-[8px] h-[8px] mr-[3px] border border-[#bdbdbd] bg-[#f8f8f8]">
              <svg viewBox="0 0 6 6" className="block w-[6px] h-[6px]">
                <path d="M1 3 2.500 4.500 5 1" stroke="#a3a3a3" fill="none" />
              </svg>
            </div>
            不列出外部参照中的样式<span className="ml-[2px]"><Key k="D" /></span>
          </div>
        </div>
        <div className="mt-[6px] w-[154px] h-[36px] border border-[#d5dfe5] rounded-[2px] pl-[4px]">
          <div className="w-[19px] h-[9px] -mt-[6px] bg-[#f0f0f0]">说明</div>
          <Mono>ISO-25</Mono>
        </div>
      </div>
      <div className="flex justify-end gap-[9px] mt-[12px]">
        <DialogButton label="关闭" />
        <DialogButton label="帮助" k="H" />
      </div>
    </div>
  </div>
);

export default function App() {
  return (
    <div className="relative w-[554px] h-[462px] overflow-hidden bg-[#0d55a8] flex flex-col font-['Noto_Sans_CJK_SC',sans-serif] text-[#1c1c1c]">
      <div className="h-[4px] shrink-0 bg-[#0b4a97]" />
      <div className="flex h-[454px] shrink-0">
        <div className="w-[5px] shrink-0 bg-gradient-to-b from-[#0c52a3] via-[#1b8fd6] via-40% to-[#58bfcb] border-r border-[#3d4c56]" />
        <div className="w-[549px] bg-[#f0f0f0] flex flex-col">
          {/* Title bar */}
          <div className="h-[16px] shrink-0 bg-[#555] flex items-center pl-[1px] border-t border-[#3c4650]">
            <Icon name="logo" />
            <span className="ml-[5px] text-[10px] leading-[14px] text-[#b9b9b9] whitespace-pre font-['Open_Sans','Noto_Sans_CJK_SC',sans-serif] tracking-[-0.15px]">
              中望CAD+ 2012 专业版 - [Drawing1.dwg]
            </span>
          </div>

          {/* Menu bar */}
          <div className="h-[15px] shrink-0 flex items-center pl-[1px] text-[9px] leading-[12px]">
            <div className="w-[17px]"><Icon name="doc" /></div>
            {menus.map((m) => (
              <div key={m.key} className="whitespace-nowrap shrink-0" style={{ width: m.width }}>
                {m.label}
                <span className="tracking-[-0.7px]">(<u>{m.key}</u>)</span>
              </div>
            ))}
          </div>

          {/* Toolbars */}
          <div className="h-[19px] shrink-0 flex items-center border-b border-[#d2d2d2]">
            <Tools
              items={[
                ['grip', 9], 'new', 'open', 'save', ['|', 4], 'print', 'preview', 'printok', ['|', 5],
                'cut', 'copy', 'paste', 'brush', ['|', 5], 'undo', ['down', 10], 'redo', ['down', 10], ['|', 3],
                'pan', 'zoom', 'zoomwin', 'zoomprev', ['|', 4], 'props', 'center', 'palette', ['|', 5],
                'help', ['grip', 10], 'textstyle',
              ]}
            />
            <Combo className="w-[70px] pl-[2px]">Standard</Combo>
            <Tools items={[['|', 6], 'dimstyle']} />
            <Combo className="w-[60px] pl-[2px]" arrow={false}>ISO-25</Combo>
          </div>
          <div className="h-[20px] shrink-0 flex items-center border-b border-[#d2d2d2]">
            <Tools items={[['grip', 9], 'layers']} />
            <Combo className="w-[209px] ml-[1px] pl-[1px]">
              <Tools items={[['bulb', 11], ['sun', 12], ['freeze', 13], ['lock', 12]]} />
              <div className="w-[8px] h-[8px] mt-px border border-[#222] bg-white" />
              <span className="ml-[3px]">0</span>
            </Combo>
            <Tools items={['stack', 'stackgreen', 'layers', ['|', 3], ['grip', 10]]} />
            <Combo className="w-[104px] pl-[2px]">
              <div className="w-[8px] h-[8px] mr-[2px] border border-[#333] bg-white" />
              ByLayer
            </Combo>
            <Tools items={[['|', 5]]} />
            <Combo className="w-[111px] pl-[2px]">
              <div className="w-[42px] h-px mr-[3px] bg-[#444]" />
              ByLayer
            </Combo>
            <Tools items={[['|', 6]]} />
            <Combo className="w-[40px] pl-[1px]" arrow={false}>
              <div className="w-[36px] h-px bg-[#444]" />
            </Combo>
          </div>
          <div className="h-[19px] shrink-0 flex items-center border-b border-[#b9c2cc]">
            <Tools
              items={[
                ['grip', 9], 'tri', 'tri3', 'wiresphere', 'box1', 'sphere1', 'box2', 'sphere2', ['grip', 11],
                'cube', 'ball', 'cyl', 'cone', 'wedge', 'torus', ['|', 5], 'extrude', 'revolve', ['|', 4],
                'slice', 'section', 'interfere', 'cubew', ['grip', 12], 'view', ['|', 4],
                'cubea', 'cubeb', 'cubea', 'cubec', 'cubed', 'cubee', ['|', 5],
                'dia1', 'dia2', 'dia3', 'dia4', ['|', 6],
              ]}
            />
            <Combo className="w-[20px]" arrow={false} />
          </div>

          {/* Work area */}
          <div className="h-[326px] shrink-0 flex overflow-hidden">
            <div className="w-[18px] shrink-0 flex flex-col items-center pt-[2px] border-r border-[#c4c4c4]">
              <VGrip />
              <VTools items={drawTools} />
              <div className="w-full h-px bg-[#c4c4c4] mt-[4px] mb-[3px]" />
              <VGrip />
              <VTools items={['text', 'texti']} />
            </div>
            <div className="w-[19px] shrink-0 flex flex-col items-center pt-[2px] border-r border-[#8f8f8f]">
              <VGrip />
              <VTools items={modifyTools} />
              <div className="w-full h-px bg-[#c4c4c4] mt-[3px] mb-[3px]" />
              <VGrip />
              <div className="mt-[1px]"><VTools items={['order']} /></div>
              <div className="w-full h-px bg-[#b4b4b4] my-[2px]" />
              <VTools items={['edithatch', 'pencil', 'pencil']} />
            </div>
            <div className="w-[512px] flex flex-col">
              <div className="h-[17px] shrink-0 flex items-end bg-gradient-to-b from-[#a9c6ee] to-[#f1f6fd]">
                <div className="ml-[2px] w-[91px] h-[16px] border border-b-0 border-[#5c5346] bg-gradient-to-b from-[#fbe2bd] to-[#f3bd75] flex items-center pl-[4px]">
                  <Icon name="doc" />
                  <span className="ml-[4px] text-[9px] font-bold font-['DejaVu_Sans',sans-serif] tracking-[-0.85px] text-[#2b1f10]">
                    Drawing1.dwg
                  </span>
                </div>
              </div>
              <div className="h-[296px] shrink-0 bg-black flex items-end">
                <svg viewBox="42 326 82 80" className="block w-[82px] h-[80px]" fill="none" stroke="#cfcfcf">
                  <path d="M51.500 391.500h6v6h-6zM54.500 391V345M57.500 394.500H104" />
                  <path d="M54.500 343 52.500 349h4zM106 394.500 99 392.500v4z" fill="#cfcfcf" stroke="none" />
                  <g fill="#cfcfcf" stroke="none" fontFamily="Liberation Sans, sans-serif" fontSize="11">
                    <text x="52" y="339.500">Y</text>
                    <text x="109.500" y="398.500">X</text>
                  </g>
                </svg>
              </div>
              <div className="h-[13px] shrink-0 flex items-center text-[9px] leading-[12px]">
                <svg viewBox="0 0 42 12" className="block w-[42px] h-[12px]" fill="#bdbdbd">
                  <path d="M5 3h1v6H5zM10 3v6L6 6zM21 3v6l-4-3zM27 3v6l4-3zM38 3v6l4-3z" />
                </svg>
                <svg viewBox="0 0 10 12" className="block w-[10px] h-[12px] ml-[2px]" stroke="#222" fill="none">
                  <path d="M2.500 0 8.500 12" />
                </svg>
                <span className="font-bold w-[18px]">模型</span>
                <svg viewBox="0 0 10 12" className="block w-[9px] h-[12px]" stroke="#222" fill="none">
                  <path d="M8.500 0 2.500 12" />
                </svg>
                <span className="w-[22px] whitespace-nowrap">布局1</span>
                <svg viewBox="0 0 10 12" className="block w-[11px] h-[12px]" stroke="#222" fill="none">
                  <path d="M2.500 0 8.500 12" />
                </svg>
                <span className="w-[22px] whitespace-nowrap">布局2</span>
                <svg viewBox="0 0 10 12" className="block w-[10px] h-[12px]" stroke="#222" fill="none">
                  <path d="M8.500 0 2.500 12" />
                </svg>
                <div className="ml-auto w-[12px] h-[11px] border border-l-white border-t-white border-[#777] flex items-center justify-center">
                  <div className="border-y-[2.5px] border-y-transparent border-r-[3px] border-r-black" />
                </div>
                <div className="w-[106px] h-full bg-[#f7f7f7]" />
              </div>
            </div>
          </div>

          {/* Command line */}
          <div className="h-[23px] shrink-0 flex items-end border-t border-[#a3a3a3]">
            <div className="w-[12px] pl-[4px] text-[8px] leading-[8px] font-bold self-center font-['DejaVu_Sans',sans-serif]">x</div>
            <div className="flex-1 h-[19px] bg-white border-t-2 border-l-2 border-[#707070]" />
          </div>

          {/* Status bar */}
          <div className="h-[18px] shrink-0 flex items-center border-t border-[#c2c2c2] border-b-2 border-b-[#8b9299]">
            <div className="w-[179px] h-[13px] pl-[4px] border border-[#c6c6c6] border-r-white border-b-white text-[8px] leading-[12px] whitespace-pre font-['Liberation_Mono',monospace] tracking-[-0.58px]">
              332.9898, 349.9557, 0.0000
            </div>
            <div className="flex items-center gap-[1px] pl-[1px]">
              {['snap', 'grid', 'ortho', 'polar', 'osnap', 'otrack', 'lwt', 'model'].map((name) => (
                <div
                  key={name}
                  className={`w-[16px] h-[14px] flex items-center justify-center ${
                    ['ortho', 'osnap', 'model'].includes(name) ? 'border-t border-l border-[#666]' : 'border-r border-b border-[#bbb]'
                  }`}
                >
                  <Icon name={name} />
                </div>
              ))}
            </div>
          </div>
        </div>
      </div>

      <StyleDialog />

      {/* Red marker around the modify button */}
      <div className="absolute left-[468px] top-[187px] w-[57px] h-[26px] rounded-[50%] border-[3px] border-[#c4232c]" />

      {/* Site logo */}
      <svg viewBox="0 0 132 36" className="absolute left-[422px] top-[426px] w-[132px] h-[36px] drop-shadow-[1px_1px_1px_#7d7d7d]" fill="#fff">
        <text x="4" y="31.500" fontSize="31" fontWeight="bold" fontFamily="Open Sans, sans-serif" textLength="39" lengthAdjust="spacingAndGlyphs">
          3D
        </text>
        <text x="45" y="31" fontSize="28" fontWeight="500" fontFamily="Noto Sans CJK SC, sans-serif" textLength="84">
          溜溜网
        </text>
      </svg>
    </div>
  );
}
